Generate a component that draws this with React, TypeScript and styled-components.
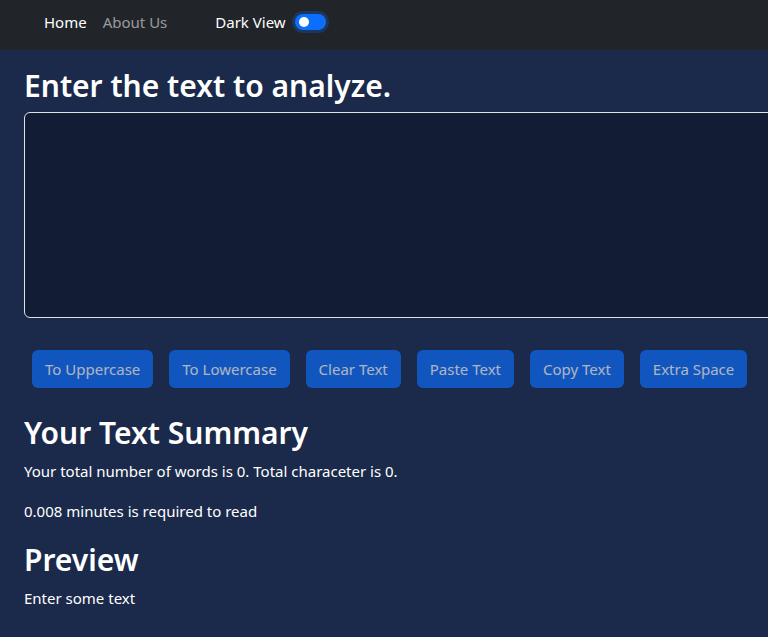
import styled, { createGlobalStyle } from 'styled-components';

const buttons = ['To Uppercase', 'To Lowercase', 'Clear Text', 'Paste Text', 'Copy Text', 'Extra Space'];

const App = () => {
  return (
    <>
      <GlobalStyle />
      <Navbar>
        <NavLinks>
          <NavLink $active>Home</NavLink>
          <NavLink>About Us</NavLink>
        </NavLinks>
        <SwitchLabel>
          Dark View
          <Switch />
        </SwitchLabel>
      </Navbar>
      <Main>
        <Title>Enter the text to analyze.</Title>
        <TextArea rows={8} />
        <ButtonRow>
          {buttons.map((b) => (
            <Button key={b} type="button" disabled>
              {b}
            </Button>
          ))}
        </ButtonRow>
        <Title>Your Text Summary</Title>
        <Text>Your total number of words is 0. Total characeter is 0.</Text>
        <Text $gap={19}>0.008 minutes is required to read</Text>
        <Title>Preview</Title>
        <Text>Enter some text</Text>
      </Main>
    </>
  );
};

export default App;

const GlobalStyle = createGlobalStyle`
  * {
    box-sizing: border-box;
  }
  html, body {
    margin: 0;
    overflow: hidden;
  }
  body {
    background: #1b2a4b;
    color: #fff;
    font-family: 'Noto Sans', 'Open Sans', sans-serif;
    font-size: 15px;
    line-height: 24px;
  }
`;

const Navbar = styled.nav`
  display: flex;
  align-items: center;
  height: 50px;
  padding: 0 0 6px 36px;
  background: #212529;
`;

const NavLinks = styled.div`
  display: flex;
`;

const NavLink = styled.a<{ $active?: boolean }>`
  padding: 8px;
  color: ${({ $active }) => ($active ? '#fff' : 'rgba(255, 255, 255, 0.55)')};
  cursor: pointer;
`;

const SwitchLabel = styled.label`
  display: flex;
  align-items: center;
  gap: 9px;
  margin-left: 40px;
  color: #fff;
`;

const Switch = styled.span`
  position: relative;
  display: inline-block;
  width: 31px;
  height: 16px;
  border-radius: 8px;
  background: #0d6efd;
  box-shadow: 0 0 0 3px rgba(13, 110, 253, 0.25);

  &::after {
    content: '';
    position: absolute;
    top: 3px;
    left: 4px;
    width: 10px;
    height: 10px;
    border-radius: 50%;
    background: #fff;
  }
`;

const Main = styled.main`
  display: flex;
  flex-direction: column;
  padding: 18px 0 0 24px;
`;

const Title = styled.h1`
  margin: 0 0 8px;
  font-size: 30px;
  font-weight: 600;
  line-height: 36px;
`;

const TextArea = styled.textarea`
  width: 800px;
  height: 206px;
  padding: 6px 12px;
  border: 1px solid #dee2e6;
  border-radius: 6px;
  background: #131c35;
  color: #fff;
  font: inherit;
  resize: none;
  outline: none;
`;

const ButtonRow = styled.div`
  display: flex;
  gap: 16px;
  margin: 32px 0 27px 8px;
`;

const Button = styled.button`
  height: 38px;
  padding: 0 13px;
  border: 0;
  border-radius: 6px;
  background: #0d6efd;
  color: #fff;
  font: inherit;
  opacity: 0.65;
`;

const Text = styled.p<{ $gap?: number }>`
  margin: 0 0 ${({ $gap }) => $gap ?? 16}px;

  &:last-child {
    margin-bottom: 0;
  }
`;
